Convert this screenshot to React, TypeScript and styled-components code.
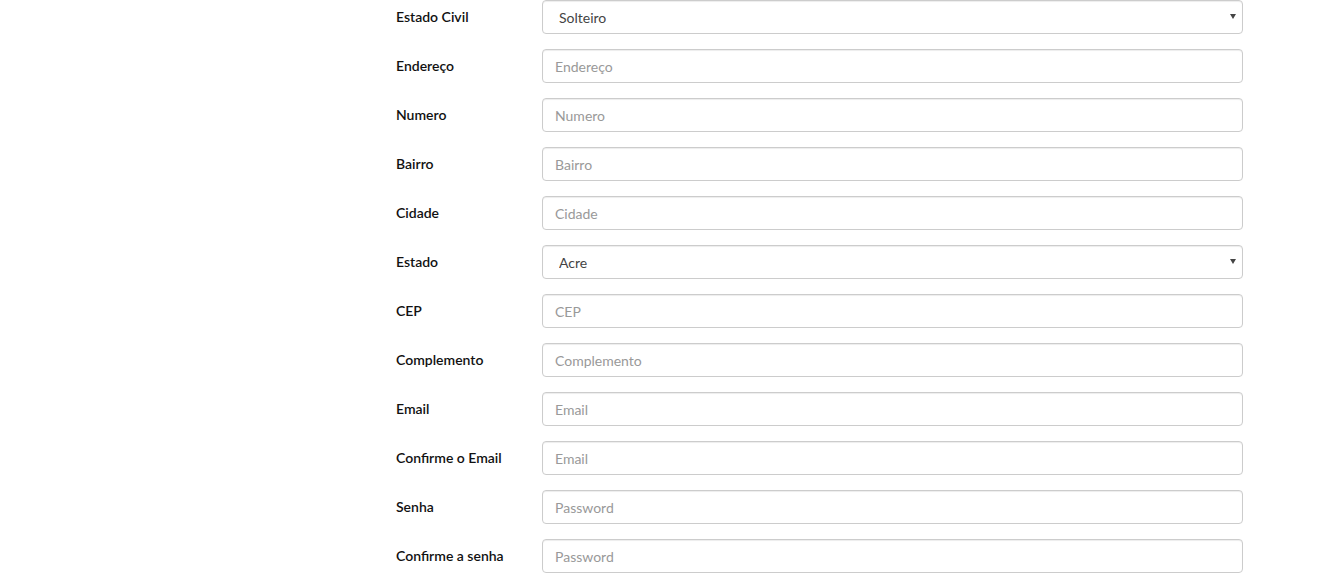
import React from "react";
import styled, { createGlobalStyle } from "styled-components";

const GlobalStyle = createGlobalStyle`
  body {
    margin: 0;
    background: #fff;
    font-family: Lato, "Open Sans", sans-serif;
  }
`;

interface Field {
  label: string;
  placeholder?: string;
  options?: string[];
  type?: string;
}

const fields: Field[] = [
  { label: "Estado Civil", options: ["Solteiro", "Casado", "Divorciado", "Viúvo"] },
  { label: "Endereço", placeholder: "Endereço" },
  { label: "Numero", placeholder: "Numero" },
  { label: "Bairro", placeholder: "Bairro" },
  { label: "Cidade", placeholder: "Cidade" },
  { label: "Estado", options: ["Acre", "Alagoas", "Amapá", "Amazonas", "Bahia"] },
  { label: "CEP", placeholder: "CEP" },
  { label: "Complemento", placeholder: "Complemento" },
  { label: "Email", placeholder: "Email", type: "email" },
  { label: "Confirme o Email", placeholder: "Email", type: "email" },
  { label: "Senha", placeholder: "Password", type: "password" },
  { label: "Confirme a senha", placeholder: "Password", type: "password" },
];

function App() {
  return (
    <>
      <GlobalStyle />
      <Form>
        {fields.map((f) => (
          <Row key={f.label}>
            <Label>{f.label}</Label>
            {f.options ? (
              <SelectWrap>
                <Select defaultValue={f.options[0]}>
                  {f.options.map((o) => (
                    <option key={o}>{o}</option>
                  ))}
                </Select>
                <Caret />
              </SelectWrap>
            ) : (
              <Input type={f.type || "text"} placeholder={f.placeholder} />
            )}
          </Row>
        ))}
      </Form>
    </>
  );
}

export default App;

const Form = styled.form`
  display: flex;
  flex-direction: column;
  gap: 15px;
  padding-left: 396px;
`;

const Row = styled.div`
  display: grid;
  grid-template-columns: 146px 701px;
  align-items: center;
  height: 34px;
`;

const Label = styled.label`
  font-size: 14px;
  font-weight: 600;
  color: #111;
  padding-bottom: 2px;
`;

const controlBase = `
  box-sizing: border-box;
  width: 100%;
  height: 34px;
  border: 1px solid #ccc;
  border-radius: 4px;
  background: #fff;
  font-family: Lato, "Open Sans", sans-serif;
  font-size: 14px;
  color: #555;
  outline: none;
  box-shadow: inset 0 1px 1px rgba(0, 0, 0, 0.075);
`;

const Input = styled.input`
  ${controlBase}
  padding: 6px 12px;
  &::placeholder {
    color: #999;
  }
`;

const SelectWrap = styled.div`
  position: relative;
  width: 100%;
`;

const Select = styled.select`
  ${controlBase}
  appearance: none;
  padding: 6px 12px 6px 16px;
  color: #444;
`;

const Caret = styled.span`
  position: absolute;
  right: 7px;
  top: 14px;
  width: 0;
  height: 0;
  border-left: 3px solid transparent;
  border-right: 3px solid transparent;
  border-top: 5px solid #444;
  pointer-events: none;
`;
